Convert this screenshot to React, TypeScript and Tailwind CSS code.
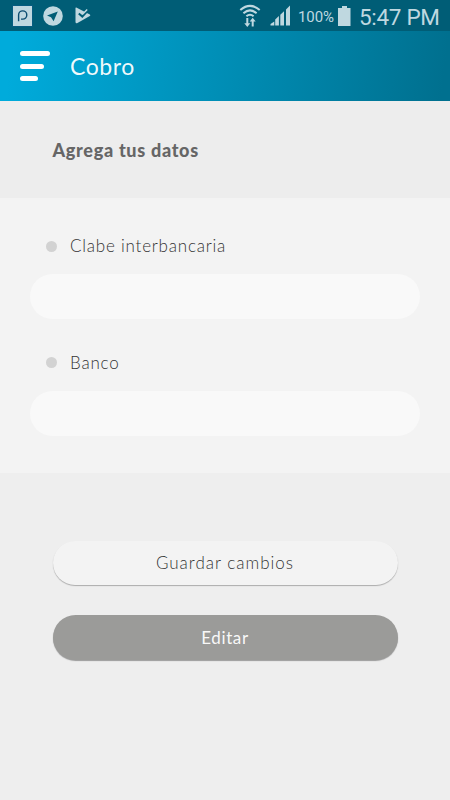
import React from "react";

interface FieldProps {
  id: string;
  label: string;
}

function StatusBar() {
  return (
    <div className="h-[31px] bg-[#005d76] text-[#bfd8e0] fill-current flex items-center pl-3 pr-[11px] font-[Roboto,sans-serif]">
      {/* Notifications */}
      <svg width="21" height="22" viewBox="0 0 21 22" className="shrink-0">
        <rect x="0.5" y="0.5" width="20" height="21" fill="#bfd8e0" stroke="#075c80" />
        <path d="M6.6 16.3V10a4.1 4.1 0 1 1 4.1 4.1H9" fill="none" stroke="#0b4c70" strokeWidth="1.4" />
      </svg>
      <svg width="20" height="20" viewBox="0 0 20 20" className="ml-[9.5px] shrink-0">
        <circle cx="10" cy="10" r="9.8" />
        <path d="M14.8 5.4 L4 9.4 L8 11.2 L10.6 15.2 Z" fill="#005d76" />
      </svg>
      <svg width="17" height="17" viewBox="0 0 17 17" className="ml-3 shrink-0">
        <path d="M1.3 0.5 L14.8 7.5 Q16 8.2 14.8 9 L2 16.3 Q0.5 16.5 0.5 15 V1 Q0.6 0.2 1.3 0.5Z" />
        <path d="M3.8 6.4 L7.3 9.6 L12.7 3.9" fill="none" stroke="#005d76" strokeWidth="2" />
        <path d="M7.8 7 L12.2 2.4" fill="none" stroke="#bfd8e0" strokeWidth="1.4" />
      </svg>

      {/* System */}
      <div className="ml-auto flex items-center">
        <svg width="22" height="24" viewBox="0 0 22 24">
          <g fill="none" stroke="#bfd8e0" strokeWidth="2">
            <path d="M1.3 6 Q11 -2.2 20.7 6" />
            <path d="M4.4 9.2 Q11 3.6 17.6 9.2" />
            <path d="M7.4 12.3 Q11 9.2 14.6 12.3" />
          </g>
          <path d="M7.3 14h2v5.2h2l-3 3.8-3-3.8h2zM12.7 22.5v-5h-2l3-3.8 3 3.8h-2v5z" />
        </svg>
        <svg width="21" height="21" viewBox="0 0 21 21" className="ml-[9px]">
          <path d="M0.5 20.5v-1.5l3.8-2.5v4zM5.2 20.5v-6l3.7-3.4v9.4zM10.3 20.5V9.8l3.7-3.6v14.3zM16 20.5V4.5L20 0.5v20z" />
        </svg>
        <span className="ml-[7px] w-[36px] pt-[3px] text-[15px] leading-none tracking-[-0.1px] whitespace-nowrap">100%</span>
        <svg width="13" height="20" viewBox="0 0 13 20" className="ml-[4px]">
          <path d="M4 0h5v2h3.5v18H0V2h4z" />
        </svg>
        <span className="ml-[8px] w-[80px] pt-[3px] text-[22.5px] leading-none tracking-[-0.3px] whitespace-nowrap">5:47 PM</span>
      </div>
    </div>
  );
}

function Header() {
  return (
    <header className="h-[70px] bg-linear-[97deg] from-[#00abdb] from-3% to-[#00708f] to-98% flex items-center pl-5">
      <button aria-label="Menú" className="flex w-[30px] flex-col gap-[7.5px]">
        <span className="h-[5px] w-[30px] rounded-full bg-white" />
        <span className="h-[5px] w-6 rounded-full bg-white" />
        <span className="h-[5px] w-[18px] rounded-full bg-white" />
      </button>
      <h1 className="ml-5 text-[23px] leading-none tracking-[0.6px] text-white/95">Cobro</h1>
    </header>
  );
}

function Field({ id, label }: FieldProps) {
  return (
    <div className="flex flex-col">
      <label htmlFor={id} className="flex h-5 items-center pl-4 text-[17px] font-light tracking-[0.78px] text-[#333333]">
        <span className="mr-[13px] h-[11px] w-[11px] rounded-full bg-[#d2d2d2]" />
        {label}
      </label>
      <input id={id} className="mt-[18px] h-[45px] w-full rounded-full bg-[#f9f9f9] px-5 outline-none" />
    </div>
  );
}

export default function App() {
  return (
    <main className="flex h-screen w-full flex-col overflow-hidden bg-[#eeeeee] font-[Lato,sans-serif]">
      <StatusBar />
      <Header />

      <section className="h-[97px] bg-[#ededed] pt-[37px] pl-[52.5px]">
        <h2 className="text-[18px] leading-6 font-black tracking-[0.7px] text-[#666666]">Agrega tus datos</h2>
      </section>

      <section className="flex h-[275px] flex-col gap-[33.5px] bg-[#f3f3f3] px-[30px] pt-[38px]">
        <Field id="clabe" label="Clabe interbancaria" />
        <Field id="banco" label="Banco" />
      </section>

      <section className="flex flex-col gap-[30px] px-[52.5px] pt-[67.6px] text-[17px] font-light tracking-[1px]">
        <button className="h-[44.6px] rounded-full bg-[#f3f3f3] text-[#333333] shadow-[0_1px_1px_rgba(0,0,0,0.28)]">
          Guardar cambios
        </button>
        <button className="h-[44.8px] rounded-full bg-[#9b9b99] font-normal tracking-[0.6px] text-white/95 shadow-[0_1px_1px_rgba(0,0,0,0.35)]">
          Editar
        </button>
      </section>
    </main>
  );
}
